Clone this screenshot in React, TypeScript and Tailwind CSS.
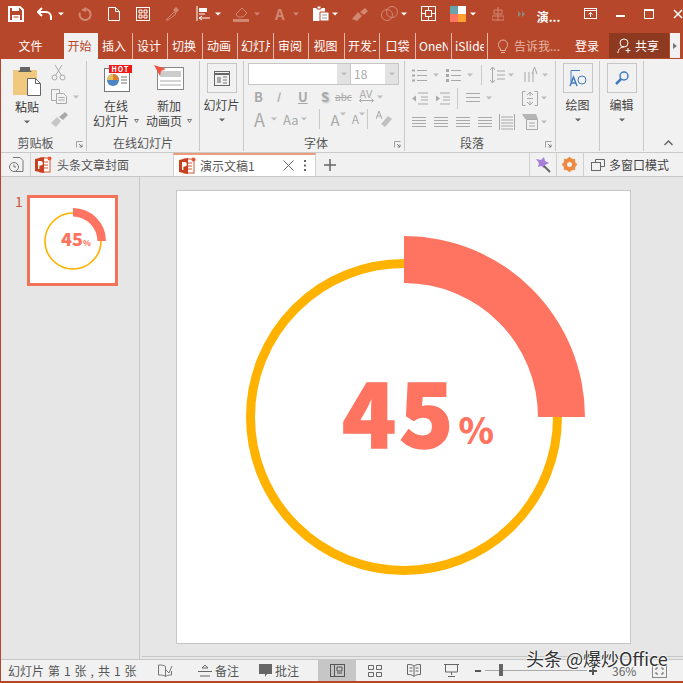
import React from "react";

const FONT = '"Noto Sans CJK SC", "Noto Sans", sans-serif';
const G = "#a9a9a9";
const W = "#ffffff";
const D = "#d08873";

type SP = { w: number; h: number; cls?: string; children: React.ReactNode };
function S({ w, h, cls, children }: SP) {
  return (
    <svg width={w} height={h} viewBox={`0 0 ${w} ${h}`} className={`block shrink-0 ${cls ?? ""}`} fill="none">
      {children}
    </svg>
  );
}
function Caret({ c = "#8a8a8a", cls = "" }: { c?: string; cls?: string }) {
  return (
    <S w={6} h={4} cls={cls}>
      <path d="M0 0.5h6L3 3.5z" fill={c} />
    </S>
  );
}
function PptIcon() {
  return (
    <S w={17} h={17}>
      <rect x="5" y="2" width="10" height="14" fill="#fff" stroke="#d2542f" />
      <path d="M9 6h4M9 9h4M9 12h4" stroke="#d2542f" />
      <path d="M0 3l9-2v16l-9-2z" fill="#c8401f" />
      <path d="M3 13V5h2.6a2.2 2.2 0 010 4.6H4.4V13z" fill="#fff" />
      <circle cx="14.5" cy="2.5" r="2" fill="#f0532c" />
    </S>
  );
}
function Gauge({ size }: { size: number }) {
  return (
    <svg width={size} height={size} viewBox="0 0 362 362" className="block">
      <circle cx="181" cy="181" r="153.5" stroke="#FFB300" strokeWidth="9" fill="none" />
      <path d="M181 0A181 181 0 01362 181H315A134 134 0 00181 47z" fill="#FF7461" />
    </svg>
  );
}
function Tab({ t, active, w }: { t: string; active?: boolean; w: string }) {
  return (
    <div
      className={`flex items-center justify-center h-full text-[12px] ${w} ${
        active ? "bg-[#f1f1f1] text-[#b7472a]" : "text-white border-r border-[#e3b7a9]"
      }`}
    >
      <span className="overflow-hidden whitespace-nowrap">{t}</span>
    </div>
  );
}
function Group({ w, label, launcher, children }: { w: string; label?: string; launcher?: boolean; children: React.ReactNode }) {
  return (
    <div className={`${w} shrink-0 h-full flex flex-col border-r border-[#c9c9c9]`}>
      <div className="h-[75px] relative">{children}</div>
      <div className={`relative h-[14px] flex items-center justify-center text-[12px] leading-[14px] text-[#555] ${launcher ? "pr-[16px]" : ""}`}>
        {label}
        {launcher && (
          <S w={7} h={7} cls="absolute right-[3px] top-[5px]">
            <path d="M0.5 6.5V0.5H6.5" stroke="#a0a0a0" />
            <path d="M3 3l3 3M6 3.5V6H3.5" stroke="#808080" />
          </S>
        )}
      </div>
    </div>
  );
}
function Lines({ w = 14, n = 4, gap = 3, c = G }: { w?: number; n?: number; gap?: number; c?: string }) {
  const ys = Array.from({ length: n }, (_, i) => i * gap + 1.5);
  return (
    <S w={w} h={n * gap + 1}>
      {ys.map((y) => (
        <path key={y} d={`M0 ${y}H${w}`} stroke={c} />
      ))}
    </S>
  );
}
function BigBox({ children }: { children: React.ReactNode }) {
  return (
    <div className="w-[30px] h-[30px] border border-[#c6c6c6] flex items-center justify-center">{children}</div>
  );
}

export default function App() {
  return (
    <div
      className="w-[683px] h-[683px] overflow-hidden flex flex-col bg-[#b7472a] pl-px pb-[2px] text-[#444]"
      style={{ fontFamily: FONT }}
    >
      {/* title bar */}
      <div className="h-[33px] shrink-0 flex items-center text-white -ml-px pb-[6px]">
        <S w={16} h={16} cls="ml-[8px]">
          <path d="M1 1h11l3 3v11H1z" stroke={W} strokeWidth="2" />
          <path d="M4 1h7v4H4zM4 9h8v6H4z" fill={W} />
          <path d="M5.5 11h5" stroke="#b7472a" />
        </S>
        <S w={16} h={14} cls="ml-[13px]">
          <path d="M5 1L1 5l4 4" stroke={W} strokeWidth="2" />
          <path d="M1 5h8a5 5 0 015 5v3" stroke={W} strokeWidth="2" />
        </S>
        <Caret c={W} cls="ml-[5px]" />
        <S w={14} h={14} cls="ml-[14px]">
          <path d="M7 2a5.5 5.5 0 11-5 3.5" stroke={D} strokeWidth="2" />
          <path d="M8 0v5L3 3z" fill={D} />
        </S>
        <S w={12} h={14} cls="ml-[16px]">
          <path d="M.5.5h7l4 4v9H.5z" stroke={W} />
          <path d="M7.5.5v4h4" stroke={W} />
        </S>
        <S w={14} h={14} cls="ml-[16px]">
          <rect x=".5" y=".5" width="13" height="13" stroke={W} />
          <path d="M3 3h3v3H3zM8 3h3v3H8zM3 8h3v3H3zM8 8h3v3H8z" stroke={W} />
        </S>
        <S w={16} h={16} cls="ml-[14px]">
          <path d="M2 14l8-8 2 2-8 6z" stroke={D} />
          <path d="M9 4l3-3 3 3-3 3z" fill={D} />
        </S>
        <S w={17} h={15} cls="ml-[16px]">
          <path d="M1 0v15" stroke={W} />
          <path d="M3 2h8v4H3z" fill={W} />
          <path d="M3 8h6M3 12h11M6 10l-3 2 3 2" stroke={W} />
        </S>
        <Caret c={W} cls="ml-[2px]" />
        <S w={18} h={16} cls="ml-[12px]">
          <path d="M3 8l6-6 5 5-4 4H5z" stroke={D} />
          <path d="M0 13h16v3H0z" fill={D} />
        </S>
        <Caret c={D} cls="ml-[3px]" />
        <span className="ml-[15px] text-[15px] leading-none font-bold text-[#d08873]">A</span>
        <Caret c={D} cls="ml-[8px]" />
        <S w={18} h={17} cls="ml-[13px]">
          <path d="M1 3h12v13H1z" fill={W} />
          <path d="M5 1h4v3H5z" fill={W} stroke="#b7472a" />
          <path d="M8 7h9v9H8z" fill={W} stroke="#b7472a" />
          <path d="M10 10h5M10 13h5" stroke="#999" />
        </S>
        <Caret c={W} cls="ml-[2px]" />
        <S w={17} h={14} cls="ml-[14px]">
          <path d="M0 12l6-7 4 4-5 5z M8 5l5-4 3 3-4 4z" fill={D} />
        </S>
        <S w={17} h={16} cls="ml-[12px]">
          <circle cx="6" cy="9" r="5.5" stroke={D} />
          <circle cx="11" cy="6" r="5.5" stroke={D} />
        </S>
        <Caret c={W} cls="ml-[3px]" />
        <S w={15} h={15} cls="ml-[14px]">
          <rect x=".5" y=".5" width="14" height="14" stroke={W} />
          <rect x="4.5" y="4.5" width="6" height="6" stroke={W} />
          <path d="M7.5 1v3M7.5 11v3M1 7.5h3M11 7.5h3" stroke={W} />
        </S>
        <S w={16} h={16} cls="ml-[14px]">
          <path d="M0 0h8v8H0z" fill="#6aa3a8" />
          <path d="M8 0h8v8H8z" fill="#fff" />
          <path d="M0 8h8v8H0z" fill="#ff7461" />
          <path d="M8 8h8v8H8z" fill="#ffa030" />
        </S>
        <Caret c={W} cls="ml-[4px]" />
        <S w={12} h={14} cls="ml-[16px]">
          <path d="M6 0v14M2 3h8v4H2zM0 9h12v4H0z" stroke={D} />
        </S>
        <S w={7} h={6} cls="ml-[14px]">
          <path d="M0 0l3 3-3 3zM4 0l3 3-3 3z" fill="#8e8a80" />
        </S>
        <span className="ml-[12px] mt-[6px] w-[26px] whitespace-nowrap text-[12px] font-bold">演...</span>
        <S w={13} h={11} cls="ml-[21px]">
          <rect x=".5" y=".5" width="12" height="10" stroke={W} />
          <path d="M1 2.5h11" stroke={W} />
          <path d="M6.5 9V4.5M4.5 6.5l2-2 2 2" stroke={W} />
        </S>
        <S w={9} h={2} cls="ml-[19px] mt-[4px]">
          <path d="M0 1h9" stroke={W} strokeWidth="2" />
        </S>
        <S w={10} h={10} cls="ml-[19px]">
          <path d="M.5 1.5h9v8h-9z" stroke={W} />
          <path d="M0 1h10" stroke={W} strokeWidth="2" />
        </S>
        <S w={10} h={10} cls="ml-[19px]">
          <path d="M1 1l8 8M9 1l-8 8" stroke={W} strokeWidth="1.5" />
        </S>
      </div>

      {/* ribbon tabs */}
      <div className="h-[26px] shrink-0 flex items-stretch text-white">
        <div className="w-[63px] flex items-center justify-center text-[12px] pr-[4px]">文件</div>
        <Tab t="开始" active w="w-[34px] pr-[3px]" />
        <Tab t="插入" w="w-[35px] pr-[2px]" />
        <Tab t="设计" w="w-[35px] pr-[2px]" />
        <Tab t="切换" w="w-[35px] pr-[2px]" />
        <Tab t="动画" w="w-[35px] pr-[2px]" />
        <Tab t="幻灯片" w="w-[36px] px-[3px] justify-start" />
        <Tab t="审阅" w="w-[35px] pr-[2px]" />
        <Tab t="视图" w="w-[36px] pr-[2px]" />
        <Tab t="开发工具" w="w-[35px] px-[3px] justify-start" />
        <Tab t="口袋" w="w-[36px]" />
        <Tab t="OneNote" w="w-[36px] px-[3px] justify-start" />
        <Tab t="iSlide" w="w-[36px] px-[3px] justify-start" />
        <div className="flex items-center pl-[10px] text-[12px] text-[#e4b3a3] w-[87px]">
          <S w={10} h={15} cls="mr-[6px]">
            <path d="M2.5 10C1 8.5.5 7 .5 5.5a4.5 4.5 0 019 0C9.500 7 9 8.500 7.500 10v1.500h-5zM3 13.500h4" stroke="#e4b3a3" />
          </S>
          <span className="whitespace-nowrap">告诉我...</span>
        </div>
        <div className="w-[34px] flex items-center text-[12px]">登录</div>
        <div className="w-[60px] mb-[1px] bg-[#8e3a20] flex items-center justify-center gap-[3px] text-[12px] pr-[2px]">
          <S w={15} h={16}>
            <circle cx="7" cy="5" r="4" stroke={W} />
            <path d="M1 15c0-4 3-6 6-6M11 10v5M8.500 12.500h5" stroke={W} />
          </S>
          共享
        </div>
        <div className="w-[10px] ml-[1px] mb-[1px] bg-[#f1f1f1] flex items-center justify-center">
          <S w={4} h={6}>
            <path d="M0 0l4 3-4 3z" fill="#777" />
          </S>
        </div>
      </div>

      {/* ribbon */}
      <div className="h-[93px] shrink-0 bg-[#f1f1f1] flex pt-[2px] pb-[1px]">
        <Group w="w-[86px]" label="剪贴板" launcher>
          <div className="flex">
            <div className="w-[50px] flex flex-col items-center pl-[2px] pt-[6px]">
              <S w={28} h={29}>
                <path d="M0 3h24v25H0z" fill="#f0c87e" />
                <path d="M7 3V0h10v3l2 2H5z" fill="#666" />
                <path d="M14.500 11.500h8l5 5v12h-13z" fill="#fff" stroke="#666" />
                <path d="M22.500 11.500v5h5" stroke="#666" />
              </S>
              <span className="text-[12px] leading-[16px] mt-[3px] text-[#333]">粘贴</span>
              <Caret c="#666" cls="mt-[5px]" />
            </div>
            <div className="flex flex-col pt-[4px]">
              <S w={15} h={16}>
                <circle cx="3.500" cy="12.500" r="2.500" stroke={G} />
                <circle cx="11.500" cy="12.500" r="2.500" stroke={G} />
                <path d="M4.500 10.500L11 0M10.500 10.500L4 0" stroke={G} />
              </S>
              <div className="flex items-center mt-[8px] gap-[6px]">
                <S w={16} h={15}>
                  <path d="M.5.5h8v11h-8z" stroke={G} />
                  <path d="M5.500 4.500h7l3 3v7h-10z" fill="#f1f1f1" stroke={G} />
                  <path d="M7.500 8.500h6M7.500 11h6" stroke={G} />
                </S>
                <Caret c="#bbb" />
              </div>
              <S w={17} h={15} cls="mt-[8px]">
                <path d="M0 11l6-6 4 4-5 6z" fill="#c6c6c6" />
                <path d="M8 5l6-5 3 3-5 5z" fill="#a9a9a9" />
              </S>
            </div>
          </div>
        </Group>
        <Group w="w-[113px]" label="在线幻灯片">
          <div className="flex text-[12px] leading-[15px] text-[#444] pt-[4px]">
            <div className="w-[58px] flex flex-col items-center">
              <div className="relative w-[26px] h-[27px] ml-[2px]">
                <S w={26} h={27} cls="mt-[1px]">
                  <rect x=".5" y="2.500" width="25" height="23" fill="#fff" stroke="#777" />
                  <circle cx="9" cy="14" r="6" fill="#4d86c2" />
                  <path d="M9 14V8a6 6 0 016 6z" fill="#e07f32" />
                  <path d="M3 14a6 6 0 016-6v6z" fill="#e4c05a" />
                  <path d="M17 11h6M17 14h6M17 17h6" stroke="#777" />
                </S>
                <div className="absolute left-[5px] top-0 w-[23px] h-[8px] bg-[#f01a1a] text-white text-[7px] leading-[8px] tracking-[1px] text-center font-bold">
                  HOT
                </div>
              </div>
              <span className="mt-[6px]">在线</span>
              <span className="whitespace-nowrap flex items-center gap-[5px]">
                幻灯片
                <S w={5} h={4}>
                  <path d="M.5.5h4L2.500 3.500z" stroke="#777" />
                </S>
              </span>
            </div>
            <div className="w-[48px] flex flex-col items-center">
              <S w={30} h={27}>
                <rect x="3.500" y="2.500" width="26" height="22" fill="#fff" stroke="#888" />
                <path d="M6 6h21v6H6z" fill="#ccc" />
                <path d="M6 16h21M6 20h21" stroke="#aaa" />
                <path d="M0 0l12 4-5 2-1 5z" fill="#f0533f" />
              </S>
              <span className="mt-[6px]">新加</span>
              <span className="whitespace-nowrap flex items-center gap-[5px]">
                动画页
                <S w={5} h={4}>
                  <path d="M.5.5h4L2.500 3.500z" stroke="#777" />
                </S>
              </span>
            </div>
          </div>
        </Group>
        <Group w="w-[44px]">
          <div className="flex flex-col items-center pt-[2px]">
            <BigBox>
              <S w={16} h={15}>
                <rect x=".5" y=".5" width="15" height="14" stroke="#666" />
                <path d="M1 3h14" stroke="#666" strokeWidth="2" />
                <path d="M3 6h4v6H3z" fill="#aaa" />
                <path d="M9 6h4M9 9h4M9 12h4" stroke="#777" />
              </S>
            </BigBox>
            <span className="text-[12px] leading-[15px] mt-[4px] whitespace-nowrap text-[#444]">幻灯片</span>
            <Caret c="#666" cls="mt-[6px]" />
          </div>
        </Group>
        <Group w="w-[161px]" label="字体" launcher>
          <div className="flex flex-col pl-[4px] pt-[2px] text-[#a9a9a9]">
            <div className="w-[151px] h-[22px] flex border border-[#c6c6c6] bg-white">
              <div className="flex-1" />
              <div className="w-[13px] bg-[#e2e2e2] flex items-center justify-center">
                <Caret c="#bbb" />
              </div>
              <div className="w-[35px] border-l border-[#c6c6c6] text-[12px] leading-[20px] pl-[3px]">18</div>
              <div className="w-[13px] bg-[#e2e2e2] flex items-center justify-center">
                <Caret c="#bbb" />
              </div>
            </div>
            <div className="flex items-center h-[21px] mt-[1px] text-[13px] leading-none font-bold">
              <span className="ml-[6px] w-[22px]">B</span>
              <span className="w-[22px] italic font-normal">I</span>
              <span className="w-[23px] underline">U</span>
              <span className="w-[14px] [text-shadow:1px_1px_2px_#bbb]">S</span>
              <span className="text-[10px] font-normal line-through w-[23px]">abc</span>
              <div className="flex flex-col items-center w-[16px] -mt-[2px]">
                <span className="text-[11px] leading-[10px] font-normal">AV</span>
                <S w={15} h={5}>
                  <path d="M0 2.500h15M2.500 .5l-2 2 2 2M12.500 .5l2 2-2 2" stroke={G} />
                </S>
              </div>
              <Caret c="#bbb" cls="ml-[3px]" />
            </div>
            <div className="flex items-center h-[24px]">
              <span className="ml-[6px] text-[18px] leading-none">A</span>
              <Caret c="#bbb" cls="ml-[6px]" />
              <span className="ml-[6px] text-[13px] leading-none">Aa</span>
              <Caret c="#bbb" cls="ml-[2px]" />
              <div className="w-px h-[20px] bg-[#c9c9c9] ml-[12px]" />
              <span className="ml-[11px] text-[15px] leading-none">A</span>
              <Caret c="#bbb" cls="mb-[10px]" />
              <span className="ml-[6px] text-[12px] leading-none">A</span>
              <Caret c="#bbb" cls="mb-[10px]" />
              <div className="w-px h-[20px] bg-[#c9c9c9] ml-[2px]" />
              <S w={17} h={16} cls="ml-[8px]">
                <path d="M5 13l7-8 4 3-7 8z" fill="#c0c0c0" />
                <path d="M0 8l3-8 3 8M1 5h4" stroke={G} />
              </S>
            </div>
          </div>
        </Group>
        <Group w="w-[151px]" label="段落" launcher>
          <div className="flex flex-col pl-[7px] pt-[4px]">
            <div className="flex items-center h-[20px]">
              <S w={15} h={13}>
                <path d="M0 1.500h3M0 6.500h3M0 11.500h3" stroke={G} strokeWidth="2" />
                <path d="M5 1.500h10M5 6.500h10M5 11.500h10" stroke={G} />
              </S>
              <Caret c="#bbb" cls="ml-[6px]" />
              <S w={15} h={13} cls="ml-[7px]">
                <path d="M0 0h3v3H0zM0 5h3v3H0zM0 10h3v3H0z" fill={G} />
                <path d="M5 1.500h10M5 6.500h10M5 11.500h10" stroke={G} />
              </S>
              <Caret c="#bbb" cls="ml-[6px]" />
              <div className="w-px h-[20px] bg-[#c9c9c9] ml-[8px]" />
              <S w={15} h={16} cls="ml-[8px]">
                <path d="M2.500 0v16M0 3l2.500-3L5 3M0 13l2.500 3L5 13M7 4h8M7 8h8M7 12h8" stroke={G} />
              </S>
              <Caret c="#bbb" cls="ml-[3px]" />
              <S w={15} h={16} cls="ml-[10px]">
                <path d="M1 5v10M5 5v10M9 5v10" stroke={G} />
                <path d="M8 7l2.500-7L13 7" stroke={G} />
              </S>
              <Caret c="#bbb" cls="ml-[3px]" />
            </div>
            <div className="flex items-center h-[24px] mt-[1px]">
              <S w={16} h={13}>
                <path d="M6 1h10M9 5h7M9 8h7M6 12h10" stroke={G} />
                <path d="M0 6.500l4-3v6z" fill={G} />
              </S>
              <S w={16} h={13} cls="ml-[6px]">
                <path d="M6 1h10M9 5h7M9 8h7M6 12h10" stroke={G} />
                <path d="M6 6.500l-4-3v6z" fill={G} />
              </S>
              <div className="w-px h-[21px] bg-[#c9c9c9] ml-[7px]" />
              <div className="ml-[8px]">
                <Lines w={14} n={3} gap={4} />
              </div>
              <Caret c="#bbb" cls="ml-[6px]" />
              <S w={16} h={15} cls="ml-[30px]">
                <path d="M3.500.5h-3v14h3M12.500.5h3v14h-3M8 1v4M8 10v4M5 4l3-3 3 3M5 11l3 3 3-3M5 7.500h6" stroke={G} />
              </S>
              <Caret c="#bbb" cls="ml-[3px]" />
            </div>
            <div className="flex items-center h-[24px]">
              <Lines w={14} n={4} gap={3} />
              <div className="ml-[8px]">
                <Lines w={14} n={4} gap={3} />
              </div>
              <div className="ml-[8px]">
                <Lines w={14} n={4} gap={3} />
              </div>
              <div className="ml-[8px]">
                <Lines w={14} n={4} gap={3} />
              </div>
              <S w={16} h={16} cls="ml-[7px]">
                <path d="M.5 0v16M15.500 0v16" stroke={G} />
                <path d="M2 3h12M2 6h12M2 9h12M2 12h12M2 15h12" stroke={G} />
              </S>
              <S w={16} h={16} cls="ml-[7px]">
                <path d="M0 0h14l2 5H3z" fill="#b5b5b5" />
                <path d="M4.500 5.500h11v10h-11zM7 9h6M7 12h6" stroke={G} />
              </S>
              <Caret c="#bbb" cls="ml-[3px]" />
            </div>
          </div>
        </Group>
        <Group w="w-[44px]">
          <div className="flex flex-col items-center pt-[2px]">
            <BigBox>
              <S w={18} h={18}>
                <path d="M2 13V1.500h9" stroke="#3f7cbf" />
                <circle cx="13" cy="11" r="4" stroke="#3f7cbf" />
                <path d="M1 17l3.500-9L8 17M2.500 14h4" stroke="#3f7cbf" strokeWidth="1.500" />
              </S>
            </BigBox>
            <span className="text-[12px] leading-[15px] mt-[4px] text-[#444]">绘图</span>
            <Caret c="#666" cls="mt-[6px]" />
          </div>
        </Group>
        <Group w="w-[44px]">
          <div className="flex flex-col items-center pt-[2px]">
            <BigBox>
              <S w={14} h={14}>
                <circle cx="9" cy="5" r="4" stroke="#3f7cbf" strokeWidth="1.500" />
                <path d="M6 8l-5 5" stroke="#3f7cbf" strokeWidth="2.500" />
              </S>
            </BigBox>
            <span className="text-[12px] leading-[15px] mt-[4px] text-[#444]">编辑</span>
            <Caret c="#666" cls="mt-[6px]" />
          </div>
        </Group>
        <div className="flex-1 flex items-end justify-end pr-[10px] pb-[5px]">
          <S w={9} h={6}>
            <path d="M.5 5L4.500 1l4 4" stroke="#666" strokeWidth="1.500" />
          </S>
        </div>
      </div>

      {/* document tabs */}
      <div className="h-[25px] shrink-0 bg-[#f1f1f1] border-t border-[#c9c9c9] border-b flex items-stretch text-[12px] text-[#555]">
        <div className="w-[30px] border-r border-[#d0d0d0] flex items-center justify-center pl-px">
          <S w={15} h={15}>
            <path d="M4 .5h7l3 3v11H6" stroke="#777" />
            <circle cx="5" cy="10" r="4.500" fill="#f1f1f1" stroke="#777" />
            <path d="M5 7.500V10h2" stroke="#777" />
          </S>
        </div>
        <div className="w-[142px] flex items-center pl-[4px] gap-[5px]">
          <PptIcon />
          <span className="whitespace-nowrap">头条文章封面</span>
        </div>
        <div className="w-[143px] bg-white border-t-2 border-[#ec9c78] flex items-center pl-[5px] gap-[4px] border-x border-x-[#d0d0d0]">
          <PptIcon />
          <span className="whitespace-nowrap w-[79px]">演示文稿1</span>
          <S w={11} h={11}>
            <path d="M.5.5l10 10M10.500.5l-10 10" stroke="#666" />
          </S>
          <S w={2} h={11} cls="ml-[6px]">
            <path d="M0 0h2v2H0zM0 4.500h2v2H0zM0 9h2v2H0z" fill="#666" />
          </S>
        </div>
        <div className="w-[34px] flex items-center justify-center pr-[7px]">
          <S w={12} h={12}>
            <path d="M6 0v12M0 6h12" stroke="#666" strokeWidth="1.500" />
          </S>
        </div>
        <div className="flex-1 border-r border-[#d0d0d0]" />
        <div className="w-[27px] border-r border-[#d0d0d0] flex items-center justify-center">
          <S w={17} h={17}>
            <path d="M2 3l5 1 3-3 1 4 4 2-4 2-1 3-3-2-3 1 1-4z" fill="#a77fd6" />
            <path d="M10 10l6 6" stroke="#666" strokeWidth="2" />
          </S>
        </div>
        <div className="w-[27px] border-r border-[#d0d0d0] flex items-center justify-center">
          <S w={15} h={15}>
            <circle cx="7.500" cy="7.500" r="4.500" stroke="#ed8a3f" strokeWidth="4" />
            <path d="M7.500 0v3M7.500 12v3M0 7.500h3M12 7.500h3M2.200 2.200l2 2M10.800 10.800l2 2M12.800 2.200l-2 2M4.200 10.800l-2 2" stroke="#ed8a3f" strokeWidth="2" />
          </S>
        </div>
        <div className="flex items-center pl-[7px] gap-[4px] pr-[14px] text-[#444]">
          <S w={14} h={12}>
            <path d="M4.500 3V.5h9v7H10" stroke="#666" />
            <rect x=".5" y="3.500" width="9" height="8" stroke="#666" />
          </S>
          <span className="whitespace-nowrap">多窗口模式</span>
        </div>
      </div>

      {/* workspace */}
      <div className="flex-1 min-h-0 flex bg-[#e6e6e6]">
        <div className="w-[139px] shrink-0 border-r border-[#c6c6c6] flex items-start pt-[18px]">
          <span className="ml-[14px] w-[12px] text-[14px] leading-[13px] text-[#c8563b]">1</span>
          <div className="relative w-[91px] h-[91px] border-[3px] border-[#f0735a] bg-white flex items-center justify-center">
            <Gauge size={66} />
            <div className="absolute left-[31px] top-[31px] flex items-baseline font-black text-[#ff7461] leading-none">
              <span className="text-[18px]">45</span>
              <span className="text-[8px]">%</span>
            </div>
          </div>
        </div>
        <div className="flex-1 min-w-0 flex flex-col">
          <div className="flex-1 pt-[13px] pl-[36px]">
            <div className="relative w-[455px] h-[454px] bg-white border border-[#c6c6c6]">
              <div className="ml-[46px] mt-[45px]">
                <Gauge size={362} />
              </div>
              <div className="absolute left-[165px] top-[164px] flex items-baseline font-black text-[#ff7461] leading-none">
                <span className="text-[89px] leading-[110px] tracking-[3px] [-webkit-text-stroke:1.5px_#ff7461]">45</span>
                <span className="text-[36px] ml-[2px] -translate-y-[4px]">%</span>
              </div>
            </div>
          </div>
          <div className="h-[3px] ml-[2px] border-t border-[#c6c6c6]" />
        </div>
      </div>

      {/* status bar */}
      <div className="relative h-[22px] shrink-0 bg-[#f1f1f1] border-t border-[#c6c6c6] flex items-center text-[12px] text-[#555]">
        <span className="ml-[7px] w-[150px] whitespace-nowrap [word-spacing:1.3px]">幻灯片 第 1 张 , 共 1 张</span>
        <S w={15} h={13}>
          <path d="M7.500 2.500C6 1 3 1 .5 1v10c3 0 5 0 7 1.500V2.500zM7.500 12.500c1-1 3-1.500 6-1.500V7M8 6l3 3 3-7" stroke="#777" />
        </S>
        <S w={14} h={12} cls="ml-[25px]">
          <path d="M7 0L4 3h6zM0 6.500h14M2 11h10" stroke="#666" />
        </S>
        <span className="ml-[3px] w-[44px]">备注</span>
        <S w={13} h={13}>
          <path d="M0 0h13v10H8l-2 3v-3H0z" fill="#666" />
        </S>
        <span className="ml-[3px] w-[30px]">批注</span>
        <div className="ml-[13px] w-[38px] h-full bg-[#c6c6c6] flex items-center justify-center">
          <S w={15} h={13}>
            <rect x=".5" y=".5" width="14" height="12" stroke="#555" />
            <path d="M4.500 1v11M7 3h5v4H7zM7 9h5" stroke="#555" />
          </S>
        </div>
        <S w={14} h={12} cls="ml-[12px]">
          <path d="M.5.500h5v4h-5zM8.500.500h5v4h-5zM.5 7.500h5v4h-5zM8.500 7.500h5v4h-5z" stroke="#666" />
        </S>
        <S w={14} h={13} cls="ml-[25px]">
          <path d="M7 2C5 .5 3 .5.500.5v10c2.500 0 4.500 0 6.500 2 2-2 4-2 6.500-2V.5C11 .5 9 .5 7 2zM7 2v10M2.500 4h3M2.500 7h3M8.500 4h3M8.500 7h3" stroke="#666" />
        </S>
        <S w={15} h={13} cls="ml-[23px]">
          <path d="M0 .5h15M1.500 1v7h12V1M7.500 8v3M4 12.500h7" stroke="#666" />
        </S>
        <S w={6} h={2} cls="ml-[16px]">
          <path d="M0 1h6" stroke="#555" strokeWidth="2" />
        </S>
        <div className="ml-[4px] w-[102px] h-[1px] bg-[#aaa] relative">
          <div className="absolute left-[14px] -top-[6px] w-[4px] h-[12px] bg-[#666]" />
        </div>
        <S w={8} h={8} cls="ml-[2px]">
          <path d="M4 0v8M0 4h8" stroke="#555" strokeWidth="2" />
        </S>
        <span className="ml-[15px] w-[26px] text-[#666]">36%</span>
        <S w={15} h={14} cls="ml-[14px]">
          <rect x=".5" y=".5" width="14" height="13" stroke="#888" />
          <path d="M4 4h2M4 4v2M11 4H9M11 4v2M4 10h2M4 10V8M11 10H9M11 10V8" stroke="#666" />
        </S>
        <span
          className="absolute left-[525px] -top-[12px] whitespace-nowrap text-[18px] leading-[20px] text-[#333]"
          style={{ textShadow: "0 0 2px #fff, 0 0 2px #fff, 0 0 2px #fff" }}
        >
          头条 @爆炒Office
        </span>
      </div>
    </div>
  );
}
